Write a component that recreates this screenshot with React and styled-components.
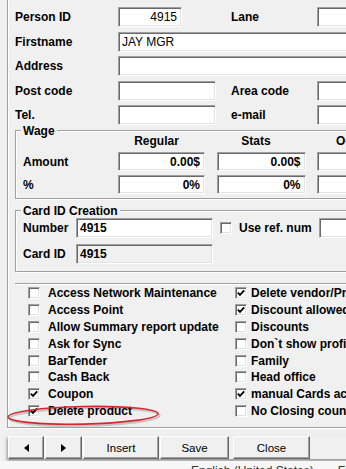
import React from "react";
import styled, { createGlobalStyle } from "styled-components";

const Global = createGlobalStyle`
  html, body { margin: 0; padding: 0; overflow: hidden; background: #f0f0f0; }
  body { font-family: "Liberation Sans", Arial, sans-serif; color: #000; }
`;

const Screen = styled.div`
  position: relative;
  width: 346px;
  height: 469px;
  overflow: hidden;
  background: #f0f0f0;
`;

const Frame = styled.div`
  margin-left: 7px;
  width: 420px;
  height: 428px;
  box-sizing: border-box;
  border-left: 1px solid #a0a0a0;
  border-bottom: 1px solid #a0a0a0;
  box-shadow: inset 1px 0 0 #fff, 0 1px 0 #fff;
  padding: 7px 0 0 7px;
`;

const Fields = styled.div`
  display: grid;
  row-gap: 4.5px;
`;

const FieldRow = styled.div`
  display: flex;
  align-items: center;
  height: ${(p) => p.h || 20}px;
`;

const Label = styled.div`
  flex-shrink: 0;
  width: ${(p) => p.w}px;
  margin-left: ${(p) => p.ml || 0}px;
  font-size: 12px;
  font-weight: bold;
  white-space: nowrap;
`;

const TextBox = styled.div`
  flex-shrink: 0;
  box-sizing: border-box;
  width: ${(p) => p.w}px;
  height: ${(p) => p.h || 20}px;
  background: ${(p) => (p.disabled ? "#f0f0f0" : "#fff")};
  border: 1px solid;
  border-color: #a0a0a0 #fff #fff #a0a0a0;
  box-shadow: inset 1px 1px 0 #696969, inset -1px -1px 0 #e3e3e3;
  padding: 0 4px 0 3px;
  display: flex;
  align-items: center;
  justify-content: ${(p) => (p.right ? "flex-end" : "flex-start")};
  font-size: 12px;
  font-weight: ${(p) => (p.bold ? "bold" : "normal")};
  white-space: nowrap;
`;

const Group = styled.div`
  position: relative;
  box-sizing: border-box;
  width: 400px;
  height: ${(p) => p.h}px;
  margin-top: ${(p) => p.mt}px;
  border: 1px solid #a0a0a0;
  box-shadow: inset 1px 1px 0 #fff, 1px 1px 0 #fff;
`;

const Legend = styled.div`
  position: absolute;
  top: -7px;
  left: 5px;
  padding: 0 2px;
  background: #f0f0f0;
  font-size: 12px;
  font-weight: bold;
  line-height: 14px;
  white-space: nowrap;
`;

const WageGrid = styled.div`
  display: grid;
  grid-template-columns: 83.5px 87px 89px 89px;
  grid-template-rows: 13px 19px 19px;
  column-gap: 11.5px;
  row-gap: 4px;
  padding: 4px 0 0 7px;
  align-items: center;
`;

const ColHead = styled.div`
  font-size: 12px;
  font-weight: bold;
  text-align: center;
  padding-right: 10px;
  line-height: 13px;
  white-space: nowrap;
`;

const CardRows = styled.div`
  display: grid;
  row-gap: 6px;
  padding: 7px 0 0 7px;
`;

const CheckBox = styled.span`
  flex-shrink: 0;
  box-sizing: border-box;
  width: 12px;
  height: 12px;
  background: #fff;
  border: 1px solid;
  border-color: #a0a0a0 #fff #fff #a0a0a0;
  box-shadow: inset 1px 1px 0 #696969, inset -1px -1px 0 #e3e3e3;
  margin-left: ${(p) => p.ml || 0}px;
  display: flex;
  align-items: center;
  justify-content: center;
`;

const CheckText = styled.span`
  margin-left: ${(p) => p.gap}px;
  font-size: 12px;
  font-weight: bold;
  white-space: nowrap;
  width: ${(p) => (p.w ? p.w + "px" : "auto")};
  flex-shrink: 0;
`;

const CheckPanel = styled.div`
  position: relative;
  width: 400px;
  margin-top: 11px;
  border-top: 1px solid #a0a0a0;
  box-shadow: inset 0 1px 0 #fff;
  padding: 1px 0 0 13px;
  display: grid;
  grid-template-columns: 207px 200px;
`;

const CheckColumn = styled.div`
  display: flex;
  flex-direction: column;
`;

const CheckRow = styled.div`
  display: flex;
  align-items: center;
  height: 16.8px;
`;

const Annotation = styled.svg`
  position: absolute;
  left: -10px;
  top: 120px;
  overflow: visible;
  pointer-events: none;
`;

const ButtonBar = styled.div`
  display: flex;
  margin: 8px 0 0 8px;
  width: 400px;
  height: 23px;
  background: #f0f0f0;
  box-shadow: -1px 2px 3px rgba(0, 0, 0, 0.4);
`;

const Button = styled.button`
  box-sizing: border-box;
  flex-shrink: 0;
  width: ${(p) => p.w}px;
  height: 23px;
  margin: 0 ${(p) => p.mr || 0}px 0 0;
  padding: 0;
  background: #f0f0f0;
  border: 1px solid;
  border-color: #fff #696969 #696969 #fff;
  box-shadow: inset -1px -1px 0 #a0a0a0;
  font-family: "Liberation Sans", Arial, sans-serif;
  font-size: 11.5px;
  color: #000;
  display: flex;
  align-items: center;
  justify-content: center;
`;

const Footer = styled.div`
  display: flex;
  margin-top: 2px;
  height: 12px;
  background: #f7f7f7;
  font-size: 12px;
  line-height: 20px;
  color: #333;
  white-space: nowrap;
`;

const FooterText = styled.span`
  margin-left: ${(p) => p.ml}px;
`;

const Tick = () => (
  <svg width="8" height="8" viewBox="0 0 8 8">
    <polyline points="0.8,3.6 3,5.9 7.2,1.4" fill="none" stroke="#000" strokeWidth="1.8" />
  </svg>
);

const Check = ({ checked, ml }) => <CheckBox ml={ml}>{checked ? <Tick /> : null}</CheckBox>;

const Tri = ({ dir }) => (
  <svg width="6" height="8" viewBox="0 0 6 8">
    {dir === "left" ? <polygon points="6,0 6,8 1,4" fill="#000" /> : <polygon points="0,0 0,8 5,4" fill="#000" />}
  </svg>
);

const leftChecks = [
  ["Access Network Maintenance", false],
  ["Access Point", false],
  ["Allow Summary report update", false],
  ["Ask for Sync", false],
  ["BarTender", false],
  ["Cash Back", false],
  ["Coupon", true],
  ["Delete product", true],
];

const rightChecks = [
  ["Delete vendor/Product", true],
  ["Discount allowed", true],
  ["Discounts", false],
  ["Don`t show profit", false],
  ["Family", false],
  ["Head office", false],
  ["manual Cards access", true],
  ["No  Closing count", false],
];

export default function App() {
  return (
    <Screen>
      <Global />
      <Frame>
        <Fields>
          <FieldRow>
            <Label w={103}>Person ID</Label>
            <TextBox w={64} right>4915</TextBox>
            <Label w={86} ml={49}>Lane</Label>
            <TextBox w={60} />
          </FieldRow>
          <FieldRow>
            <Label w={103}>Firstname</Label>
            <TextBox w={280}>JAY MGR</TextBox>
          </FieldRow>
          <FieldRow>
            <Label w={103}>Address</Label>
            <TextBox w={280} />
          </FieldRow>
          <FieldRow>
            <Label w={103}>Post code</Label>
            <TextBox w={98} />
            <Label w={86} ml={15}>Area code</Label>
            <TextBox w={60} />
          </FieldRow>
          <FieldRow>
            <Label w={103}>Tel.</Label>
            <TextBox w={98} />
            <Label w={86} ml={15}>e-mail</Label>
            <TextBox w={60} />
          </FieldRow>
        </Fields>

        <Group h={69} mt={5}>
          <Legend>Wage</Legend>
          <WageGrid>
            <span />
            <ColHead>Regular</ColHead>
            <ColHead>Stats</ColHead>
            <ColHead>O-Time</ColHead>
            <Label w={83}>Amount</Label>
            <TextBox w={87} h={19} right bold>0.00$</TextBox>
            <TextBox w={89} h={19} right bold>0.00$</TextBox>
            <TextBox w={89} h={19} />
            <Label w={83}>%</Label>
            <TextBox w={87} h={19} right bold>0%</TextBox>
            <TextBox w={89} h={19} right bold>0%</TextBox>
            <TextBox w={89} h={19} />
          </WageGrid>
        </Group>

        <Group h={62} mt={11}>
          <Legend>Card ID Creation</Legend>
          <CardRows>
            <FieldRow>
              <Label w={53}>Number</Label>
              <TextBox w={137} bold>4915</TextBox>
              <Check ml={7} />
              <CheckText gap={7} w={80}>Use ref. num</CheckText>
              <TextBox w={60} />
            </FieldRow>
            <FieldRow>
              <Label w={53}>Card ID</Label>
              <TextBox w={137} bold disabled>4915</TextBox>
            </FieldRow>
          </CardRows>
        </Group>

        <CheckPanel>
          <CheckColumn>
            {leftChecks.map(([t, c]) => (
              <CheckRow key={t}>
                <Check checked={c} />
                <CheckText gap={8}>{t}</CheckText>
              </CheckRow>
            ))}
          </CheckColumn>
          <CheckColumn>
            {rightChecks.map(([t, c]) => (
              <CheckRow key={t}>
                <Check checked={c} />
                <CheckText gap={4}>{t}</CheckText>
              </CheckRow>
            ))}
          </CheckColumn>
          <Annotation width="156" height="22" viewBox="0 0 156 22">
            <g transform="rotate(-1.2 78 11)">
              <ellipse cx="79.5" cy="13" rx="75" ry="8.8" fill="none" stroke="rgba(0,0,0,0.18)" strokeWidth="2.2" />
              <ellipse cx="78" cy="11.3" rx="75" ry="8.8" fill="none" stroke="#d7262c" strokeWidth="1.6" />
            </g>
          </Annotation>
        </CheckPanel>
      </Frame>

      <ButtonBar>
        <Button w={36} mr={1}><Tri dir="left" /></Button>
        <Button w={37} mr={1}><Tri dir="right" /></Button>
        <Button w={76} mr={1}>Insert</Button>
        <Button w={69} mr={4}>Save</Button>
        <Button w={77}>Close</Button>
      </ButtonBar>
      <Footer>
        <FooterText ml={191}>English (United States)</FooterText>
        <FooterText ml={24}>Français</FooterText>
      </Footer>
    </Screen>
  );
}
